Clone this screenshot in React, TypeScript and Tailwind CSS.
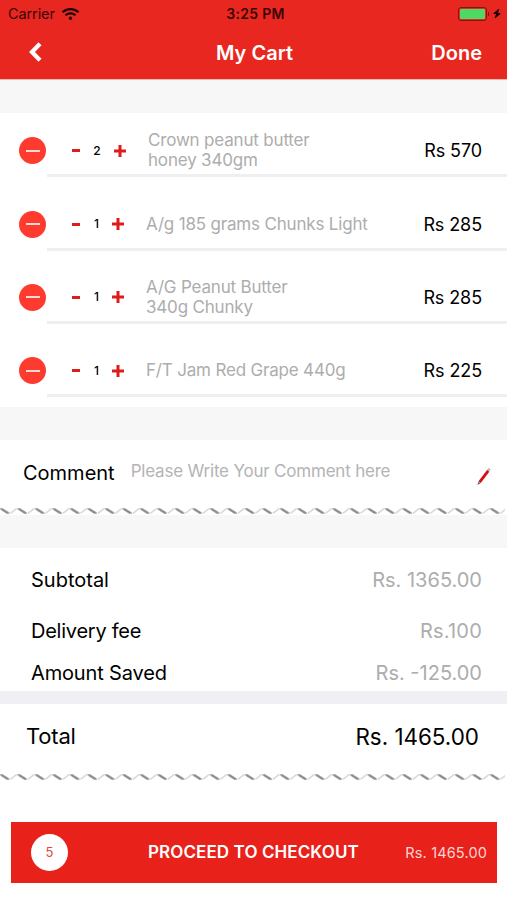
import { FaWifi } from "react-icons/fa";
import { FaBolt } from "react-icons/fa6";

const items = [
  { qty: 2, name: ["Crown peanut butter", "honey 340gm"], price: "Rs 570" },
  { qty: 1, name: ["A/g 185 grams Chunks Light"], price: "Rs 285" },
  { qty: 1, name: ["A/G Peanut Butter", "340g Chunky"], price: "Rs 285" },
  { qty: 1, name: ["F/T Jam Red Grape 440g"], price: "Rs 225" },
];

// torn paper edge under a section
function Zigzag({ id }: { id: string }) {
  return (
    <svg className="block h-[8px] w-full" fill="none">
      <defs>
        <pattern id={id} width="17.5" height="8" x="-0.2" patternUnits="userSpaceOnUse">
          <path d="M10.6 6.4 L17 1.4" stroke="#d6d6d6" strokeWidth="1.5" />
          <path d="M0 1 L2.6 1 L10 5.8 L9.4 7.2 L7 6.8 L0 2.2 Z" fill="#b8b8b8" />
          <path d="M1.6 2 L8.2 6.2" stroke="#8c8c8c" strokeWidth="2" />
        </pattern>
      </defs>
      <rect width="505" height="8" fill={`url(#${id})`} />
    </svg>
  );
}

export default function App() {
  return (
    <div className="h-[900px] w-[507px] overflow-hidden bg-white font-['Inter',sans-serif] text-black">
      {/* Header */}
      <div className="h-[79px] bg-[#e82720]">
        <div className="grid h-[27px] grid-cols-3 items-center pl-[8px] pr-[6px] text-[14px] text-[#3a0503]">
          <div className="flex items-center gap-[7px]">
            <span className="text-[14.5px] tracking-[-0.1px]">Carrier</span>
            <FaWifi className="h-[14px] w-[17px] text-[#1c0202]" />
          </div>
          <span className="pl-[2px] text-center text-[14px] font-semibold tracking-[0.3px]">3:25 PM</span>
          <div className="flex items-center justify-end">
            <div className="h-[14px] w-[29px] rounded-[3px] border border-[#7f1712] p-[1px]">
              <div className="h-full rounded-[1px] bg-[#4cd964]" />
            </div>
            <div className="ml-[1px] h-[4px] w-[1px] bg-[#7f1712]" />
            <FaBolt className="ml-[4px] h-[11px] w-[8px] text-[#1c0202]" />
          </div>
        </div>
        <div className="grid h-[51px] grid-cols-3 items-center pl-[28px] pr-[25px] text-[20px] font-semibold text-white">
          <svg className="-mt-[2px] h-[20px] w-[14px]" viewBox="0 0 14 20" fill="none">
            <path d="M12 1.8 L4 10 L12 18.2" stroke="white" strokeWidth="4.2" />
          </svg>
          <h1 className="pr-[1px] text-center">My Cart</h1>
          <span className="text-right">Done</span>
        </div>
      </div>
      <div className="h-[34px] border-t border-[#f6b5b2] bg-[#f7f7f7]" />

      {/* Cart items */}
      <div className="-mt-[9px] h-[303px]">
        {items.map((item, i) => (
          <div key={i} className="flex h-[73.3px] flex-col justify-end">
            <div className="flex h-[47px] items-center pl-[19px] pr-[25px]">
              <div className="flex size-[27px] items-center justify-center rounded-full bg-[#ff3b30]">
                <div className="h-[2px] w-[14px] bg-[#ffd9d6]" />
              </div>
              <div className="ml-[26px] h-[3px] w-[8px] bg-[#dd1c1c]" />
              <div className={item.qty > 1 ? "flex w-[34px] justify-center" : "flex w-[32px] justify-center pl-[1px]"}>
                <span className="text-[12px] font-medium">{item.qty}</span>
              </div>
              <svg className="h-[12px] w-[12px]" viewBox="0 0 12 12">
                <path d="M0 6 H12 M6 0 V12" stroke="#dd1c1c" strokeWidth="3" />
              </svg>
              <div className="-mt-[1px] ml-[22px] flex-1 text-[17px] leading-[20px] tracking-[-0.18px] text-[#adadad]">
                {item.name.map((line) => (
                  <p key={line}>{line}</p>
                ))}
              </div>
              <span className="text-[18px] tracking-[-0.1px]">{item.price}</span>
            </div>
            <div className="ml-[47px] h-[3px] bg-[#efeff1]" />
          </div>
        ))}
      </div>
      <div className="h-[33px] bg-[#f7f7f7]" />

      {/* Comment */}
      <div className="flex h-[67px] items-center pl-[23px] pr-[16px]">
        <span className="-mt-[2px] text-[20px]">Comment</span>
        <span className="-mt-[4px] ml-[16px] flex-1 text-[17px] tracking-[-0.2px] text-[#b4b4b4]">Please Write Your Comment here</span>
        <svg className="mt-[7px] h-[18px] w-[14px]" viewBox="0 0 14 18">
          <path d="M10.5 3 L12.8 0.8" stroke="#b9b4b8" strokeWidth="2.4" />
          <path d="M2.6 14.2 L11.2 2.8" stroke="#d50f14" strokeWidth="2.8" />
          <path d="M0.5 17 L1.3 13.6 L3.5 15.2 Z" fill="#666" />
        </svg>
      </div>
      <Zigzag id="comment-edge" />
      <div className="h-[33px] bg-[#f7f7f7]" />

      {/* Amounts */}
      <div className="h-[143px] pl-[31px] pr-[25px] text-[20px]">
        <div className="flex h-[63px] items-center justify-between">
          <span>Subtotal</span>
          <span className="text-[#adadad]">Rs. 1365.00</span>
        </div>
        <div className="flex h-[40px] items-center justify-between">
          <span className="tracking-[-0.25px]">Delivery fee</span>
          <span className="tracking-[0.2px] text-[#adadad]">Rs.100</span>
        </div>
        <div className="flex h-[43px] items-center justify-between">
          <span className="tracking-[-0.15px]">Amount Saved</span>
          <span className="text-[#adadad]">Rs. -125.00</span>
        </div>
      </div>
      <div className="h-[13px] bg-[#efeff4]" />

      {/* Total */}
      <div className="flex h-[65px] items-center justify-between pl-[26px] pr-[28px] text-[22px]">
        <span className="tracking-[-0.2px]">Total</span>
        <span className="text-[22.4px]">Rs. 1465.00</span>
      </div>
      <div className="pt-[4px]">
        <Zigzag id="total-edge" />
      </div>

      {/* Checkout */}
      <button className="mx-[11px] mt-[41px] flex h-[61px] w-[486px] items-center bg-[#e8211a] pl-[20px] pr-[10px] text-white">
        <span className="flex size-[37px] items-center justify-center rounded-full bg-white text-[13px] text-[#e04a45]">5</span>
        <span className="ml-[80px] flex-1 text-left text-[17px] font-semibold tracking-[0.1px]">PROCEED TO CHECKOUT</span>
        <span className="text-[14.5px] tracking-[0.15px] text-[#fbd5d3]">Rs. 1465.00</span>
      </button>
    </div>
  );
}
